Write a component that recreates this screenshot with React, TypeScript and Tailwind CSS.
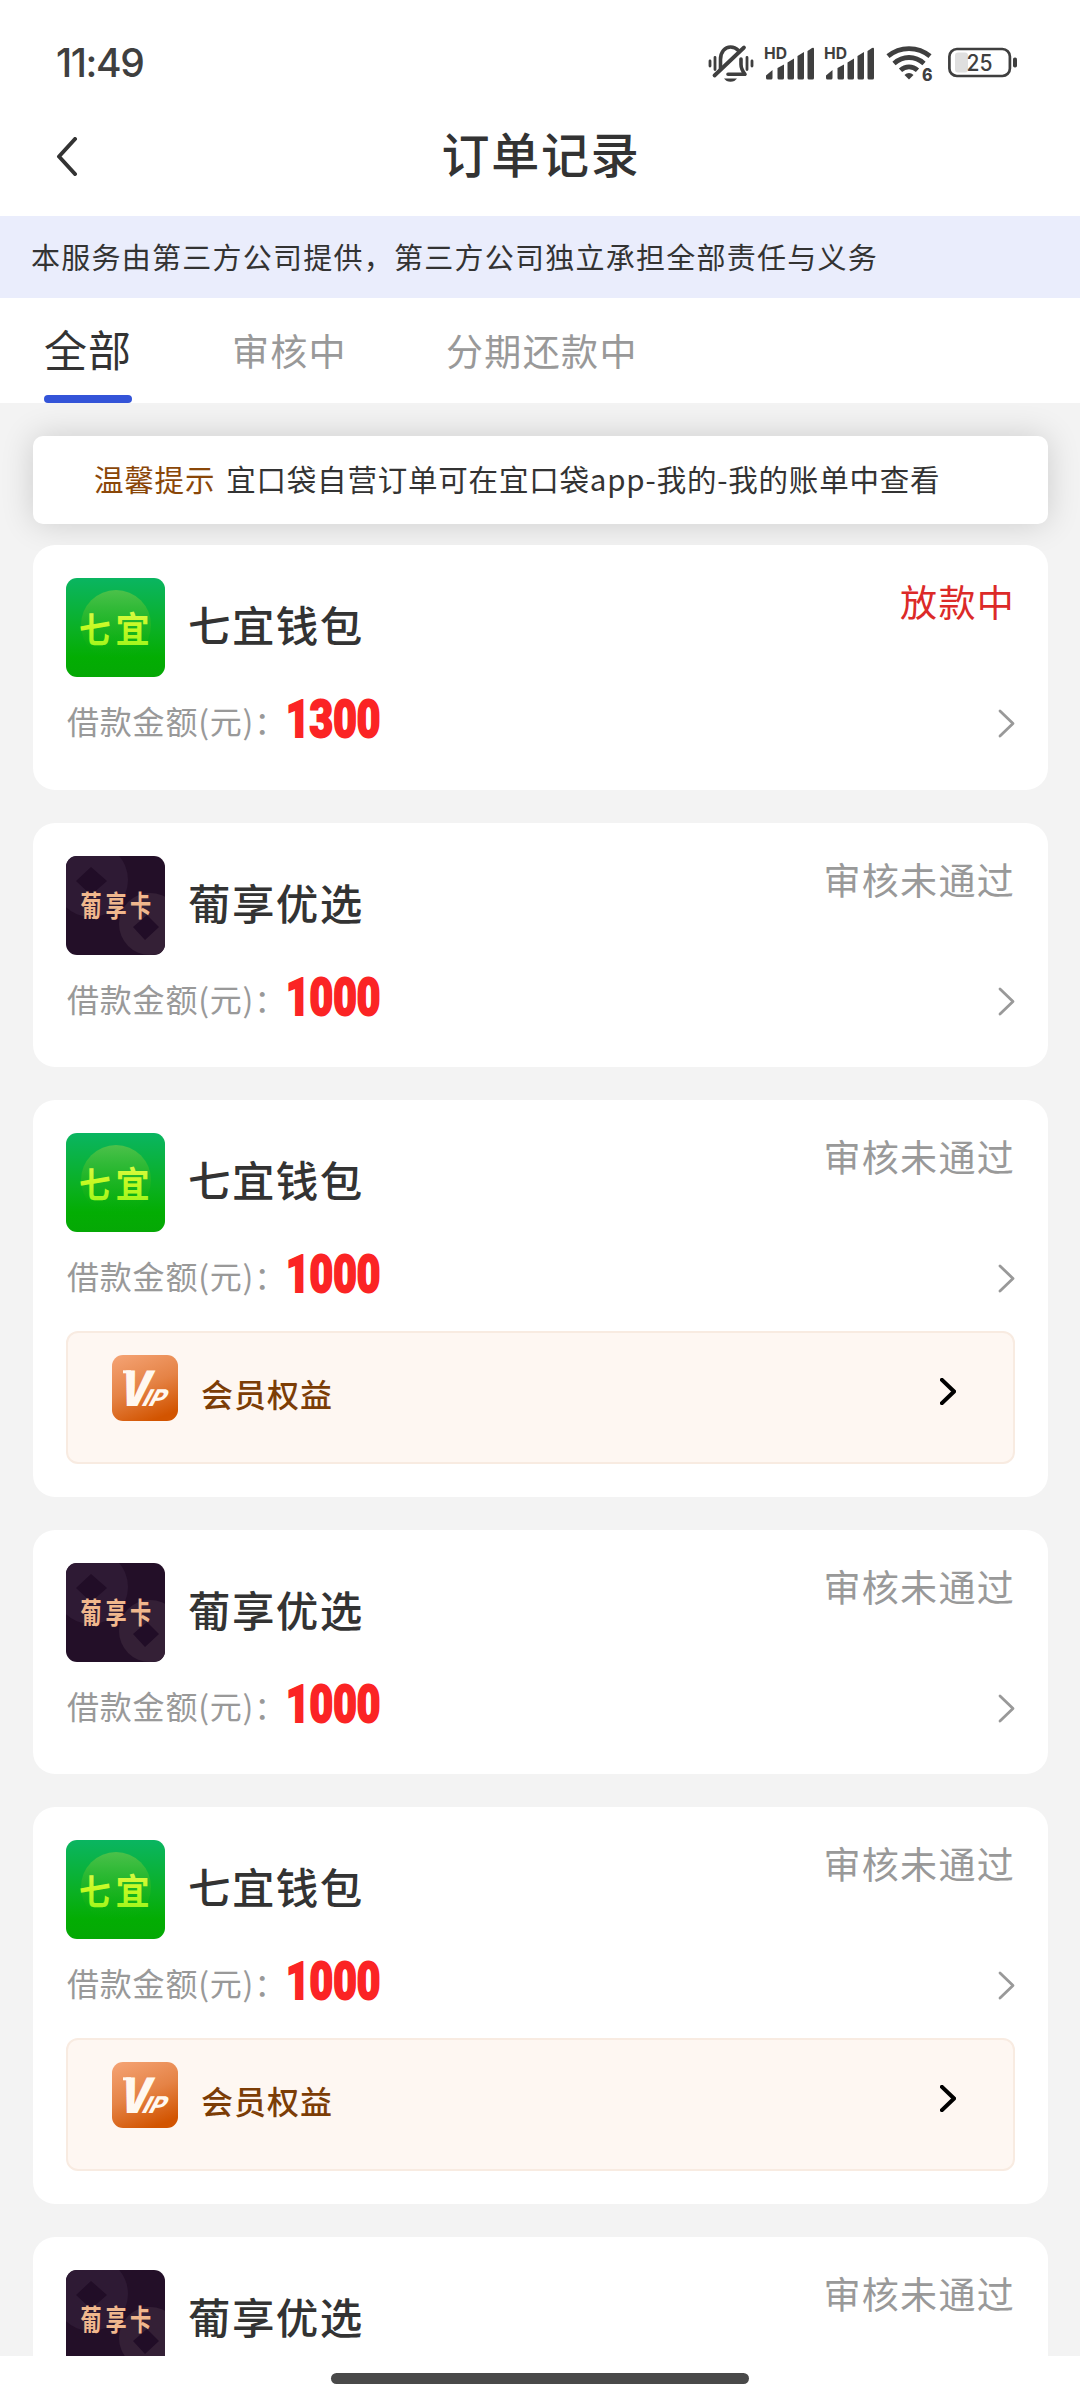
import React from "react";

type Brand = "qiyi" | "puxiang";

interface Order {
  brand: Brand;
  amount?: string;
  status: string;
  active?: boolean;
  vip?: boolean;
}

const orders: Order[] = [
  { brand: "qiyi", amount: "1300", status: "放款中", active: true },
  { brand: "puxiang", amount: "1000", status: "审核未通过" },
  { brand: "qiyi", amount: "1000", status: "审核未通过", vip: true },
  { brand: "puxiang", amount: "1000", status: "审核未通过" },
  { brand: "qiyi", amount: "1000", status: "审核未通过", vip: true },
  { brand: "puxiang", status: "审核未通过" },
];

const brandNames: Record<Brand, string> = { qiyi: "七宜钱包", puxiang: "葡享优选" };

function MutedBell() {
  return (
    <svg width="46" height="40" viewBox="0 0 46 40" fill="none" stroke="#3f3f3f" strokeWidth="3" strokeLinecap="round">
      <path d="M2 17v5M7 13.500v12M39 13.500v12M44 17v5" strokeWidth="2.800" />
      <path d="M12.500 25V15.500C12.500 8 17 3 22.500 3c3.500 0 6 1.500 8 3.500" strokeWidth="3.600" />
      <path d="M33 15v5.500c0 4 1.500 6.500 4 9.800H20" strokeWidth="3.600" strokeLinejoin="round" />
      <path d="M36 3.500 6.500 31.500" strokeWidth="3.800" />
      <path d="M16 34.500h13c-1.500 2-3.500 3.300-6.500 3.300s-5-1.300-6.500-3.300z" fill="#3f3f3f" stroke="none" />
    </svg>
  );
}

function Signal() {
  return (
    <svg width="52" height="40" viewBox="0 -4 52 40" fill="#3f3f3f" overflow="visible">
      <text x="0" y="14.500" fontFamily="Inter" fontWeight="700" fontSize="16.500" textLength="23" lengthAdjust="spacingAndGlyphs">HD</text>
      <path d="M2 31.500 8.500 26v8a1.500 1.500 0 0 1-1.500 1.500H3.500A1.500 1.500 0 0 1 2 34zM13.500 24l6.500-3.500v13.500a1.500 1.500 0 0 1-1.500 1.500H15a1.500 1.500 0 0 1-1.500-1.500zM23.500 18.500l6.500-4V34a1.500 1.500 0 0 1-1.500 1.500H25a1.500 1.500 0 0 1-1.500-1.500zM33.500 12l6.500-4v26a1.500 1.500 0 0 1-1.500 1.500H35a1.500 1.500 0 0 1-1.500-1.500zM43.500 7l4.500-3Q50 3 50 5v29a1.500 1.500 0 0 1-1.500 1.500H45a1.500 1.500 0 0 1-1.500-1.500z" />
    </svg>
  );
}

function Wifi() {
  return (
    <svg width="50" height="42" viewBox="0 0 50 42" fill="none" stroke="#3f3f3f" strokeWidth="4.800" overflow="visible">
      <path d="M2 12.200C14 2 32 2 44 12.200M8 19.500c9-8 21-8 30 0M14.500 26.200c5-4.500 12-4.500 17 0" />
      <path d="M18.500 31c2.500-2.700 6.500-2.700 9 0L23 35.500z" fill="#3f3f3f" stroke="none" />
      <text x="36" y="37" fontFamily="Inter" fontWeight="800" fontSize="17" fill="#3f3f3f" stroke="#fff" strokeWidth="2" paintOrder="stroke" textLength="10.500" lengthAdjust="spacingAndGlyphs">6</text>
    </svg>
  );
}

function Battery() {
  return (
    <svg width="70" height="32" viewBox="0 0 70 32" fill="none">
      <rect x="7" y="5.500" width="13" height="20" rx="3" fill="#dfdfdf" />
      <rect x="1.400" y="2" width="60.500" height="27" rx="7.500" stroke="#3f3f3f" strokeWidth="2.700" />
      <rect x="65" y="10.500" width="4" height="10" rx="1.800" fill="#3f3f3f" />
      <text x="18.500" y="23.500" fontFamily="Inter" fontWeight="500" fontSize="22.500" fill="#3f3f3f" textLength="26" lengthAdjust="spacingAndGlyphs">25</text>
    </svg>
  );
}

function StatusBar() {
  return (
    <div className="flex h-[126px] items-start justify-between pr-[62px] pl-[56px]">
      <span className="pt-[39px] font-[Inter] text-[39px] leading-[48px] font-medium tracking-[-1.4px] text-[#3f3f3f]">11:49</span>
      <div className="flex pt-[44px]">
        <MutedBell />
        <div className="ml-[10px] -mt-1 flex gap-2">
          <Signal />
          <Signal />
        </div>
        <div className="ml-[10px]"><Wifi /></div>
        <div className="ml-[12px] pt-[3px]"><Battery /></div>
      </div>
    </div>
  );
}

function QiyiLogo() {
  return (
    <svg className="size-[99px] rounded-[11px]" viewBox="0 0 99 99">
      <defs>
        <linearGradient id="qy-bg" x1="0" y1="0" x2="0" y2="1">
          <stop offset="0" stopColor="#0ab561" />
          <stop offset=".55" stopColor="#0ab020" />
          <stop offset=".8" stopColor="#03ad03" />
          <stop offset="1" stopColor="#05a805" />
        </linearGradient>
        <linearGradient id="qy-disc" x1="0" y1="0" x2="0" y2="1">
          <stop offset="0" stopColor="#4cc14a" />
          <stop offset=".6" stopColor="#22b51c" stopOpacity=".6" />
          <stop offset="1" stopColor="#03ad03" stopOpacity="0" />
        </linearGradient>
        <linearGradient id="qy-text" x1="0" y1="0" x2="0" y2="1">
          <stop offset="0" stopColor="#e3f95a" />
          <stop offset=".5" stopColor="#c6fa22" />
          <stop offset="1" stopColor="#93f51c" />
        </linearGradient>
      </defs>
      <rect width="99" height="99" fill="url(#qy-bg)" />
      <circle cx="50" cy="47" r="35" fill="url(#qy-disc)" />
      <g fill="url(#qy-text)" fontFamily="Noto Sans CJK SC" fontWeight="700">
        <text transform="translate(13 64.500) scale(.9 1)" fontSize="35">七</text>
        <text transform="translate(49.500 65) scale(.95 1)" fontSize="36">宜</text>
      </g>
    </svg>
  );
}

function PuxiangLogo() {
  return (
    <svg className="size-[99px] rounded-[11px]" viewBox="0 0 99 99">
      <rect width="99" height="99" fill="#230f28" />
      <circle cx="25" cy="24" r="37" fill="#2e1a34" />
      <circle cx="84" cy="68" r="31" fill="#342036" />
      <path d="M10 25 25 11l16 14-16 14zM67 71l14-12 12 12-14 13z" fill="#210d27" />
      <g fill="#f0b78d" fontFamily="Noto Sans CJK SC" fontWeight="700" fontSize="29">
        <text transform="translate(14.500 60.500) scale(.73 1)">葡</text>
        <text transform="translate(39.500 60.500) scale(.73 1)">享</text>
        <text transform="translate(64 60.500) scale(.73 1)">卡</text>
      </g>
    </svg>
  );
}

function VipLogo() {
  return (
    <svg className="size-[66px] rounded-[11px]" viewBox="0 0 66 66">
      <defs>
        <linearGradient id="vip-bg" x1=".2" y1="0" x2=".6" y2="1">
          <stop offset="0" stopColor="#f3a070" />
          <stop offset=".5" stopColor="#e58346" />
          <stop offset="1" stopColor="#d25400" />
        </linearGradient>
      </defs>
      <rect width="66" height="66" fill="url(#vip-bg)" />
      <g fill="#fff8f0" fontFamily="Inter" fontWeight="900">
        <text transform="translate(4.500 51) skewX(-14)" fontSize="49" textLength="31" lengthAdjust="spacingAndGlyphs">V</text>
        <text transform="translate(28.500 51) skewX(-28)" fontSize="23" fontWeight="800" textLength="22" lengthAdjust="spacingAndGlyphs">IP</text>
      </g>
      <rect x="11" y="15.300" width="8" height="3" fill="#fff8f0" />
    </svg>
  );
}

function Chevron({ className, width }: { className: string; width: number }) {
  return (
    <svg className={className} viewBox="0 0 17 29" fill="none" stroke="currentColor" strokeWidth={width} strokeLinecap="round" strokeLinejoin="round">
      <path d="M2 2 15 14.500 2 27" />
    </svg>
  );
}

function VipBenefits() {
  return (
    <div className="mt-[25px] flex h-[133px] items-start rounded-[12px] border-2 border-[#f8ebe1] bg-[#fef7f2] pt-[22px] pr-[57px] pl-11">
      <VipLogo />
      <span className="ml-[23px] pt-[14px] text-[32px] leading-[48px] font-medium tracking-[1px] text-[#7c3d06]">会员权益</span>
      <Chevron className="mt-[23px] ml-auto h-[27px] w-[16px] text-black" width={4.4} />
    </div>
  );
}

function OrderCard({ order }: { order: Order }) {
  return (
    <article className={`shrink-0 rounded-[22px] bg-white px-[33px] pt-[33px] ${order.vip ? "h-[396.5px]" : "h-[244.5px]"}`}>
      <div className="flex h-[99px] items-start">
        {order.brand === "qiyi" ? <QiyiLogo /> : <PuxiangLogo />}
        <h2 className="ml-[23px] pt-[14px] text-[42.5px] leading-[64px] font-medium tracking-[1.4px] text-[#333]">{brandNames[order.brand]}</h2>
        <span className={`ml-auto text-[37px] leading-[47px] tracking-[1.3px] ${order.active ? "text-[#dc2a28]" : "text-[#999]"}`}>{order.status}</span>
      </div>
      {order.amount && (
        <div className="flex h-[74px] items-start pt-[18px]">
          <span className="w-[220px] pl-px text-[32px] leading-[50px] tracking-[.8px] whitespace-nowrap text-[#999]">借款金额(元)：</span>
          <span className="h-[48px] w-[93px] origin-left scale-x-[.79] font-[Roboto] text-[51.5px] leading-[50px] font-black text-[#fb2424] [-webkit-text-stroke:2px_#fb2424]">{order.amount}</span>
          <Chevron className="mt-[14px] ml-auto h-[29px] w-[17px] text-[#999]" width={2.8} />
        </div>
      )}
      {order.vip && <VipBenefits />}
    </article>
  );
}

export default function App() {
  return (
    <div className="flex h-[2400px] w-[1080px] flex-col overflow-hidden bg-white font-['Noto_Sans_CJK_SC',sans-serif] text-[#333]">
      <StatusBar />
      <header className="flex h-[90px] shrink-0 items-start pl-[56px]">
        <svg className="mt-[11px] h-[39px] w-[22px]" viewBox="0 0 22 39" fill="none" stroke="#333" strokeWidth="4" strokeLinecap="round" strokeLinejoin="round">
          <path d="M19 2 3 19.500 19 37" />
        </svg>
        <h1 className="mr-[76px] flex-1 text-center text-[48px] leading-[52px] font-medium tracking-[1.7px]">订单记录</h1>
      </header>
      <div className="h-[82px] shrink-0 bg-[#eaedfc] pl-[31px] text-[29px] leading-[81px] tracking-[1.25px]">本服务由第三方公司提供，第三方公司独立承担全部责任与义务</div>
      <nav className="flex h-[105px] shrink-0 gap-[99px] pl-[44px]">
        <div className="flex flex-col justify-between">
          <span className="pt-[18px] text-[43px] leading-[64px] tracking-[1px]">全部</span>
          <span className="h-2 rounded-[4px] bg-[#3454d8]" />
        </div>
        <span className="pt-[20px] pl-px text-[37px] leading-[64px] tracking-[1.3px] text-[#999]">审核中</span>
        <span className="pt-[20px] text-[37px] leading-[64px] tracking-[1.4px] text-[#999]">分期还款中</span>
      </nav>
      <main className="flex h-[1953px] shrink-0 flex-col overflow-hidden bg-[#f3f3f3] pt-[33px] pr-8 pl-[33px]">
        <div className="h-[88px] shrink-0 rounded-[10px] bg-white pl-[61px] text-[29.500px] leading-[85px] tracking-[.8px] whitespace-nowrap shadow-[0_0_33px_rgba(0,0,0,0.16)]">
          <span className="mr-[11px] text-[#8a4708]">温馨提示</span>
          <span>宜口袋自营订单可在宜口袋app-我的-我的账单中查看</span>
        </div>
        <div className="relative mt-[21px] flex flex-col gap-[33px]">
          {orders.map((order, i) => (
            <OrderCard key={i} order={order} />
          ))}
        </div>
      </main>
      <footer className="flex h-[44px] shrink-0 justify-center bg-white pt-[17px]">
        <span className="h-[11px] w-[418px] rounded-full bg-[#494949]" />
      </footer>
    </div>
  );
}
